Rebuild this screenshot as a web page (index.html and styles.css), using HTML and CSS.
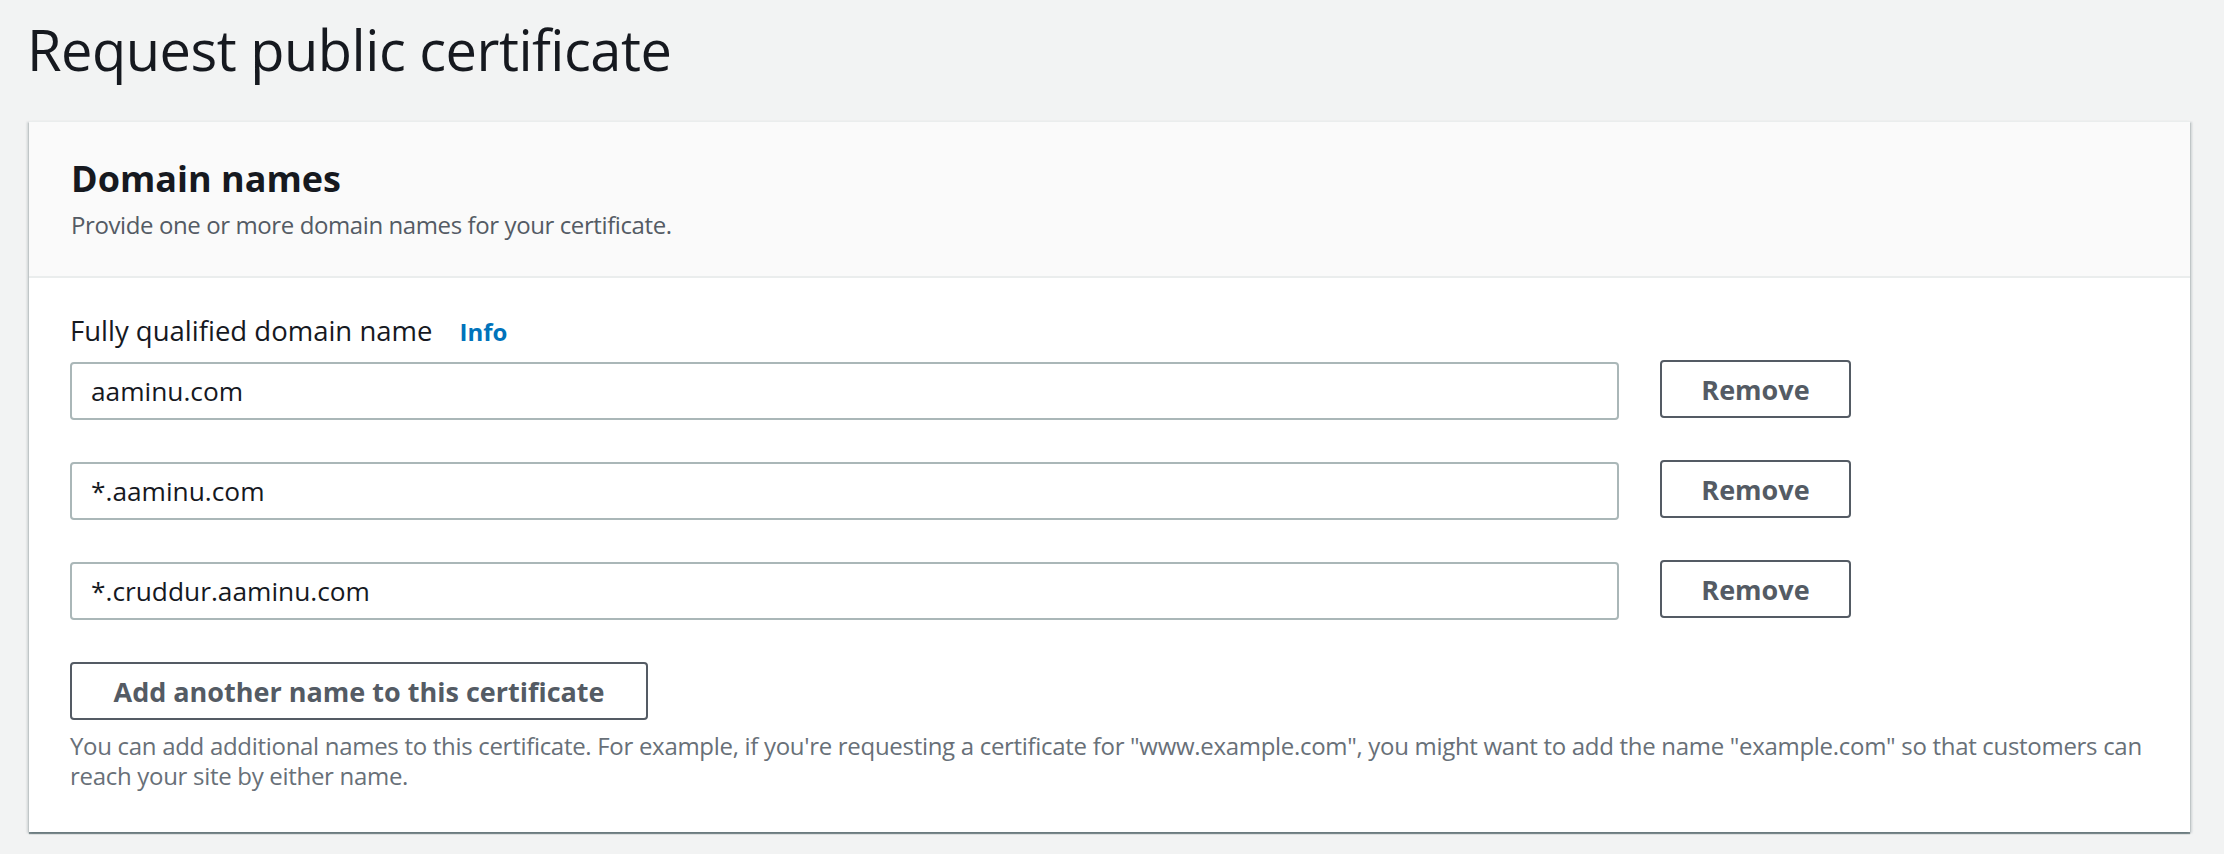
FILE: index.html
```html
<!DOCTYPE html>
<html lang="en">
<head>
<meta charset="utf-8">
<title>Request public certificate</title>
<link rel="stylesheet" href="styles.css">
</head>
<body>
<div class="page">
  <h1 class="page-title">Request public certificate</h1>
  <section class="card">
    <header class="card-header">
      <h2 class="card-title">Domain names</h2>
      <p class="card-desc">Provide one or more domain names for your certificate.</p>
    </header>
    <div class="card-body">
      <div class="field-label">
        <span class="label-text">Fully qualified domain name</span>
        <a class="info-link" href="#">Info</a>
      </div>
      <div class="rows">
        <div class="row">
          <div class="input">aaminu.com</div>
          <button class="btn btn-remove">Remove</button>
        </div>
        <div class="row">
          <div class="input">*.aaminu.com</div>
          <button class="btn btn-remove">Remove</button>
        </div>
        <div class="row">
          <div class="input">*.cruddur.aaminu.com</div>
          <button class="btn btn-remove">Remove</button>
        </div>
        <div class="row">
          <button class="btn btn-add">Add another name to this certificate</button>
        </div>
      </div>
      <p class="hint">You can add additional names to this certificate. For example, if you're requesting a certificate for "www.example.com", you might want to add the name "example.com" so that customers can reach your site by either name.</p>
    </div>
  </section>
</div>
</body>
</html>
```

FILE: styles.css
```css
html, body {
  margin: 0;
  padding: 0;
  background: #f2f3f3;
}
body {
  font-family: "Open Sans", "Noto Sans", sans-serif;
  color: #16191f;
}
.page {
  padding: 9px 34px 21px 29px;
}
.page-title {
  margin: 0 0 0 -2px;
  font-size: 56px;
  line-height: 80px;
  font-weight: 400;
  letter-spacing: -0.5px;
  color: #16191f;
}
.card {
  margin-top: 32px;
  background: #fff;
  border-top: 1px solid #eaeded;
  box-shadow: 0 2px 1px 0 rgba(0, 28, 36, 0.45), 2px 1px 2px 0 rgba(0, 28, 36, 0.15), -2px 1px 2px 0 rgba(0, 28, 36, 0.15);
}
.card-header {
  background: #fafafa;
  padding: 35px 42px 35px;
  border-bottom: 2px solid #eaeded;
}
.card-title {
  margin: 0;
  font-size: 36px;
  line-height: 44px;
  font-weight: 700;
  color: #16191f;
}
.card-desc {
  margin: 8px 0 0;
  font-size: 24px;
  line-height: 32px;
  letter-spacing: -0.4px;
  color: #545b64;
}
.card-body {
  padding: 35px 42px 41px 41px;
}
.field-label {
  display: flex;
  align-items: baseline;
  gap: 27px;
  line-height: 36px;
}
.label-text {
  font-size: 27.5px;
  color: #16191f;
}
.info-link {
  font-size: 24px;
  font-weight: 700;
  color: #0073bb;
  text-decoration: none;
}
.rows {
  margin-top: 12px;
  display: flex;
  flex-direction: column;
  gap: 42px;
}
.row {
  display: flex;
  align-items: center;
  gap: 41px;
}
.input {
  box-sizing: border-box;
  width: 1549px;
  height: 58px;
  border: 2px solid #aab7b8;
  border-radius: 4px;
  padding: 0 19px;
  display: flex;
  align-items: center;
  font-size: 26.3px;
  color: #16191f;
  background: #fff;
}
.btn {
  box-sizing: border-box;
  height: 58px;
  border: 2px solid #545b64;
  border-radius: 4px;
  background: #fff;
  color: #545b64;
  font-family: "Open Sans", "Noto Sans", sans-serif;
  font-weight: 700;
  font-size: 27px;
  padding: 0;
}
.btn-remove {
  width: 191px;
  margin-top: -4px;
}
.btn-add {
  width: 578px;
}
.hint {
  margin: 11px 0 0;
  font-size: 24px;
  line-height: 30px;
  letter-spacing: -0.3px;
  color: #687078;
}
```
